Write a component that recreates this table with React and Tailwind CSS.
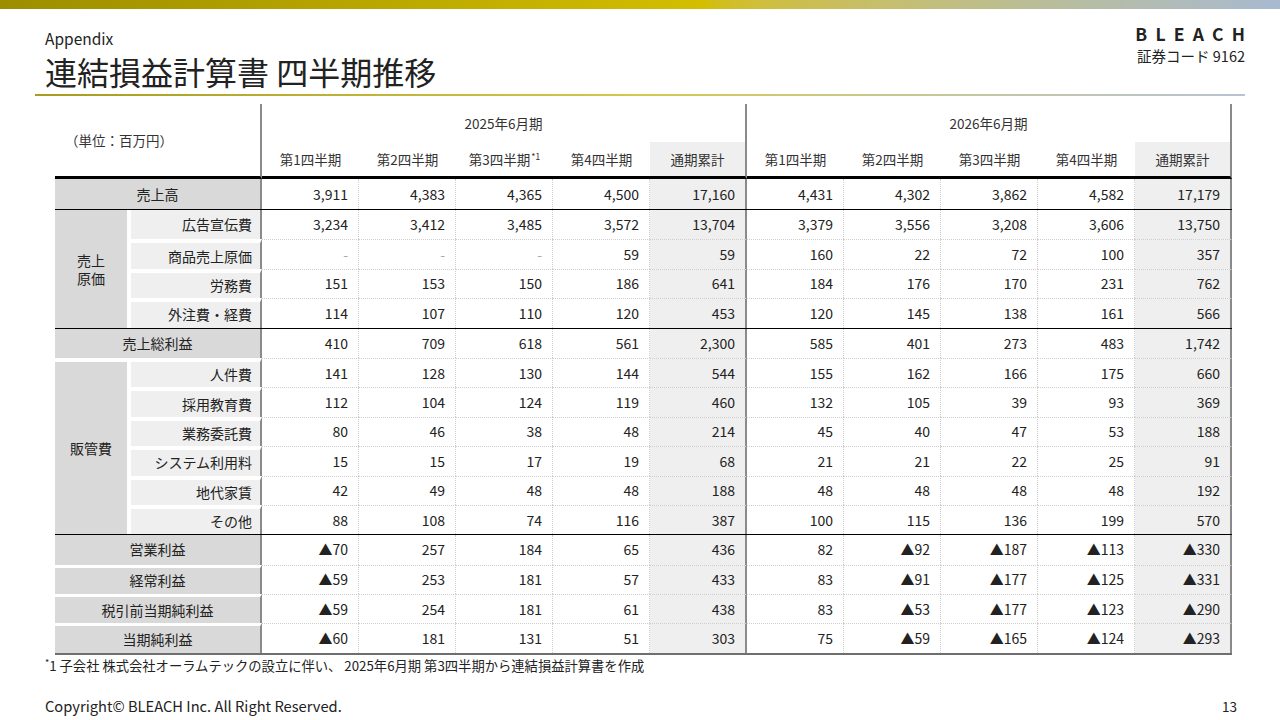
import React from 'react';

const rows = [
  { label: '売上高', kind: 'main', v: ['3,911', '4,383', '4,365', '4,500', '17,160', '4,431', '4,302', '3,862', '4,582', '17,179'] },
  { label: '広告宣伝費', kind: 'sub', start: true, group: ['売上', '原価'], span: 4, v: ['3,234', '3,412', '3,485', '3,572', '13,704', '3,379', '3,556', '3,208', '3,606', '13,750'] },
  { label: '商品売上原価', kind: 'sub', v: ['-', '-', '-', '59', '59', '160', '22', '72', '100', '357'] },
  { label: '労務費', kind: 'sub', v: ['151', '153', '150', '186', '641', '184', '176', '170', '231', '762'] },
  { label: '外注費・経費', kind: 'sub', v: ['114', '107', '110', '120', '453', '120', '145', '138', '161', '566'] },
  { label: '売上総利益', kind: 'main', start: true, v: ['410', '709', '618', '561', '2,300', '585', '401', '273', '483', '1,742'] },
  { label: '人件費', kind: 'sub', group: ['販管費'], span: 6, v: ['141', '128', '130', '144', '544', '155', '162', '166', '175', '660'] },
  { label: '採用教育費', kind: 'sub', v: ['112', '104', '124', '119', '460', '132', '105', '39', '93', '369'] },
  { label: '業務委託費', kind: 'sub', v: ['80', '46', '38', '48', '214', '45', '40', '47', '53', '188'] },
  { label: 'システム利用料', kind: 'sub', v: ['15', '15', '17', '19', '68', '21', '21', '22', '25', '91'] },
  { label: '地代家賃', kind: 'sub', v: ['42', '49', '48', '48', '188', '48', '48', '48', '48', '192'] },
  { label: 'その他', kind: 'sub', v: ['88', '108', '74', '116', '387', '100', '115', '136', '199', '570'] },
  { label: '営業利益', kind: 'main', start: true, v: ['▲70', '257', '184', '65', '436', '82', '▲92', '▲187', '▲113', '▲330'] },
  { label: '経常利益', kind: 'main', v: ['▲59', '253', '181', '57', '433', '83', '▲91', '▲177', '▲125', '▲331'] },
  { label: '税引前当期純利益', kind: 'main', v: ['▲59', '254', '181', '61', '438', '83', '▲53', '▲177', '▲123', '▲290'] },
  { label: '当期純利益', kind: 'main', v: ['▲60', '181', '131', '51', '303', '75', '▲59', '▲165', '▲124', '▲293'] },
];

const quarters = ['第1四半期', '第2四半期', '第3四半期', '第4四半期'];

const Separator = ({ color }) => (
  <tr>
    <td colSpan={12} className={color} />
  </tr>
);

const DataCell = ({ value, j, top }) => {
  const total = j === 4 || j === 9;
  let cls = 'px-2.5 text-right border-dotted border-[#cfcfcf]';
  if (top) cls += ' border-t';
  cls += total
    ? ' bg-[#efefef] border-r-2 border-r-[#8a8a8a] [border-right-style:solid]!'
    : ' border-r';
  return <td className={cls}><span className={value === '-' ? 'text-[#aaa]' : ''}>{value}</span></td>;
};

const PLTable = () => (
  <table className="table-fixed w-[1177px] border-separate border-spacing-0 text-[14px] text-[#222]">
    <colgroup>
      <col className="w-[76px]" />
      <col className="w-[131px]" />
      {Array.from({ length: 10 }).map((_, i) => <col key={i} className="w-[97px]" />)}
    </colgroup>
    <thead className="text-[13.5px] text-[#333]">
      <tr className="h-[38px]">
        <th colSpan={2} rowSpan={2} className="font-normal text-left pl-2.5 border-r-2 border-r-[#8a8a8a] border-b-[3px] border-b-black">（単位：百万円）</th>
        <th colSpan={5} className="font-normal border-r-2 border-r-[#8a8a8a]">2025年6月期</th>
        <th colSpan={5} className="font-normal border-r-2 border-r-[#8a8a8a]">2026年6月期</th>
      </tr>
      <tr className="h-[37px]">
        {[0, 1].map(y => (
          <React.Fragment key={y}>
            {quarters.map((q, i) => (
              <th key={q} className="font-normal border-b-[3px] border-b-black">
                {q}{y === 0 && i === 2 && <sup className="text-[9px] ml-px">*1</sup>}
              </th>
            ))}
            <th className="font-normal bg-[#efefef] bg-clip-padding border-b-[3px] border-b-black border-r-2 border-r-[#8a8a8a]">通期累計</th>
          </React.Fragment>
        ))}
      </tr>
    </thead>
    <tbody>
      {rows.map((r, i) => {
        const top = i !== 0 && !r.start;
        return (
          <React.Fragment key={r.label}>
            {r.start && <Separator color="h-px p-0 bg-black" />}
            <tr className={i === 0 ? 'h-[30px]' : 'h-[29.4px]'}>
              {r.kind === 'main' ? (
                <td colSpan={2} className={'text-center bg-[#d9d9d9] bg-clip-padding border-r-2 border-r-[#8a8a8a]' + (top ? ' border-t-[3px] border-t-white' : '')}>{r.label}</td>
              ) : (
                <>
                  {r.group && (
                    <td rowSpan={r.span} className={'text-center leading-[18px] bg-[#d9d9d9] bg-clip-padding border-r-4 border-r-white' + (top ? ' border-t-4 border-t-white' : '')}>
                      {r.group.map(g => <div key={g}>{g}</div>)}
                    </td>
                  )}
                  <td className={'text-right pr-2 bg-[#efefef] bg-clip-padding border-r-2 border-r-[#8a8a8a]' + (top ? ' border-t-4 border-t-white' : '')}>{r.label}</td>
                </>
              )}
              {r.v.map((v, j) => <DataCell key={j} value={v} j={j} top={top} />)}
            </tr>
          </React.Fragment>
        );
      })}
      <Separator color="h-[2px] p-0 bg-[#6f6f6f]" />
    </tbody>
  </table>
);

export default function App() {
  return (
    <div className="w-[1280px] h-[720px] bg-white overflow-hidden flex flex-col text-[#222] font-['Noto_Sans_CJK_JP','Noto_Sans',sans-serif]">
      <div className="h-[9px] shrink-0 bg-linear-to-r from-[#9c8e00] via-[#d3be00] via-55% to-[#a8b9d0]" />

      <div className="flex justify-between pl-[45px] pr-[35px]">
        <div className="pt-[19px]">
          <div className="text-[15.5px] leading-[20px]">Appendix</div>
          <div className="text-[32px] leading-[40px] mt-[3px]">連結損益計算書 四半期推移</div>
        </div>
        <div className="pt-[14px] text-right">
          <div className="text-[17.5px] leading-[22px] font-bold tracking-[0.47em] mr-[-0.47em]">BLEACH</div>
          <div className="text-[14.5px] leading-[20px] mt-[1px]">証券コード 9162</div>
        </div>
      </div>
      <div className="mx-[35px] mt-[3px] h-[2px] shrink-0 bg-linear-to-r from-[#a99a20] via-[#d6c84a] via-50% to-[#b7c3d3]" />

      <div className="mt-[8px] ml-[55px]">
        <PLTable />
      </div>

      <div className="ml-[45px] mt-[2px] text-[13.3px] leading-[18px]">
        <sup className="text-[9px]">*</sup>1 子会社 株式会社オーラムテックの設立に伴い、 2025年6月期 第3四半期から連結損益計算書を作成
      </div>

      <div className="mt-auto mb-[4px] flex justify-between pl-[45px] pr-[43px] text-[14.7px] leading-[20px]">
        <span>Copyright© BLEACH Inc. All Right Reserved.</span>
        <span className="text-[13.5px]">13</span>
      </div>
    </div>
  );
}
